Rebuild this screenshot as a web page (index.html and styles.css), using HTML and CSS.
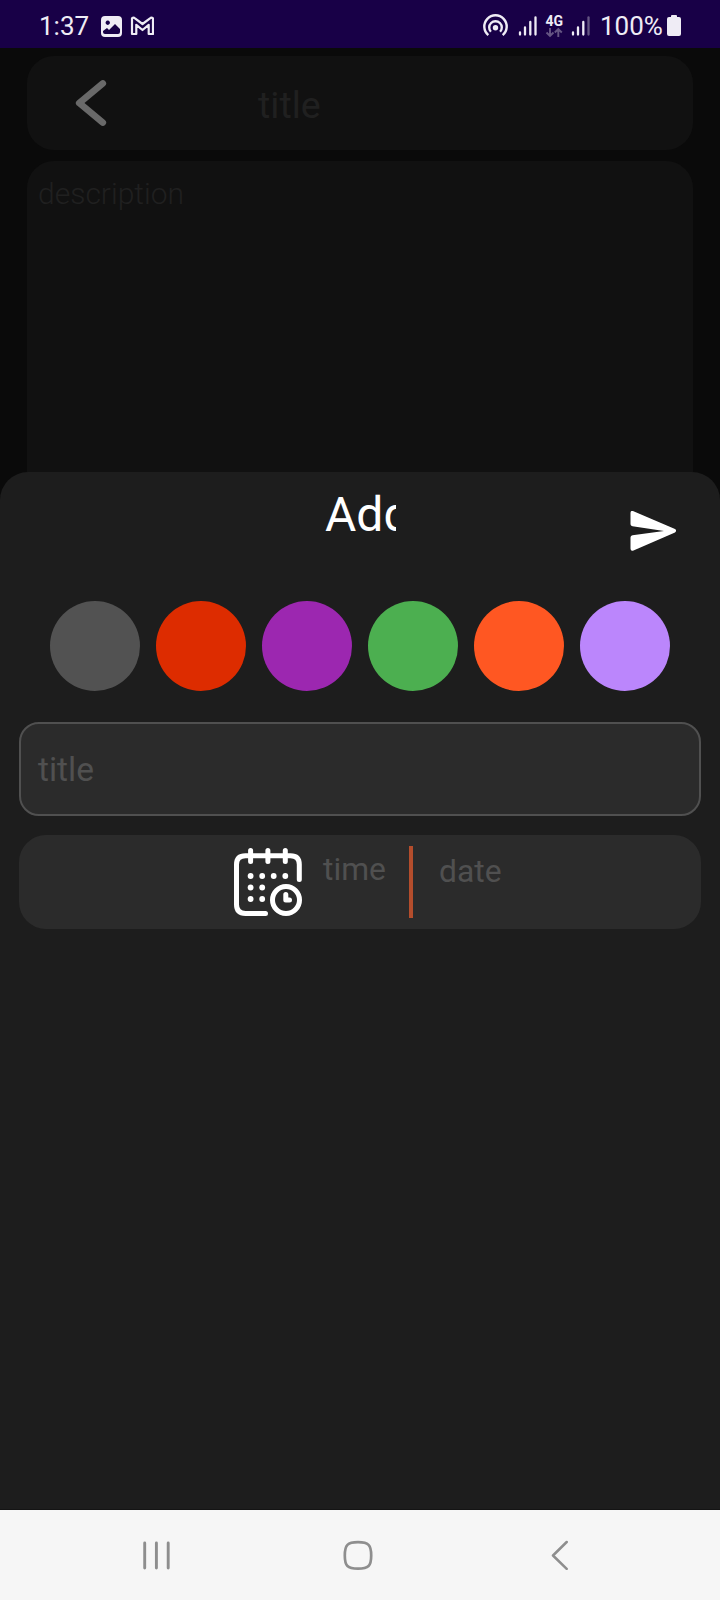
FILE: index.html
```html
<!DOCTYPE html>
<html lang="en">
<head>
<meta charset="utf-8">
<title>Add</title>
<link rel="stylesheet" href="styles.css">
</head>
<body>
<div class="screen">
  <header class="status">
    <span class="clock">1:37</span>
    <svg class="gallery" width="22" height="22" viewBox="100 15 22 22"><path fill-rule="evenodd" fill="#efecf5" d="M105 16h13q4 0 4 4v13q0 4-4 4h-13q-4 0-4-4V20q0-4 4-4zM103 32q0 2 2 2h13q2 0 2-2v-3l-5-5-6 6-2-2-4 3zM107.700 20.500a2.200 2.200 0 1 0 .1 0z"/></svg>
    <svg class="mail" width="24" height="20" viewBox="130 16 24 20"><path fill="none" stroke="#efecf5" stroke-width="2.200" stroke-linejoin="round" d="M132 18.300Q133.500 17 135 18.300L142.500 24l7.500-5.700Q151.500 17 153 18.300V34h-4.300V24.800L142.500 30l-6.200-5.200V34H132z"/></svg>
    <span class="spacer"></span>
    <svg width="120" height="26" viewBox="482 14 120 26" class="signals">
      <g fill="none" stroke="#efecf5" stroke-linecap="butt">
        <path stroke-width="2.400" d="M488.300 35.100A11.200 11.200 0 1 1 502.700 35.100"/>
        <path stroke-width="2.400" d="M490.900 31.800A6.300 6.300 0 1 1 500.100 31.800"/>
        <path stroke-width="2.300" stroke-linecap="round" d="M520 32.500V34.500M525 27.500V34.500M530.300 22V34.500M535.500 17.500V34.500M573 32.500V34.500M578 27.500V34.500M583.300 22V34.500"/>
        <path stroke="#655583" stroke-width="2.300" stroke-linecap="round" d="M588.500 17.500V34.500"/>
        <path stroke="#655583" stroke-width="1.900" d="M550 28v8M546.500 32.500l3.500 3.500 3.500-3.500M558.300 37v-8M554.800 32.500l3.500-3.500 3.500 3.500"/>
      </g>
      <circle cx="495.500" cy="27.700" r="2.700" fill="#efecf5"/>
      <text class="net" x="545.500" y="25.500">4G</text>
    </svg>
    <span class="percent">100%</span>
    <svg class="battery" width="14" height="21" viewBox="0 0 14 21"><path fill="#efecf5" d="M4 2V1q0-1 1-1h4q1 0 1 1v1h2q2 0 2 2v15q0 2-2 2H2q-2 0-2-2V4q0-2 2-2z"/></svg>
  </header>

  <main class="editor">
    <div class="card heading">
      <svg width="32" height="48" viewBox="75 79 32 48"><path fill="none" stroke="#696969" stroke-width="6.800" stroke-linecap="round" stroke-linejoin="round" d="M102.700 83.500L79.300 103l23.400 19.500"/></svg>
      <span class="heading-text">title</span>
    </div>
    <div class="card notes">description</div>
  </main>

  <section class="sheet">
    <div class="sheet-top">
      <h1 class="sheet-title">Add</h1>
      <svg class="send" width="46" height="40" viewBox="630 511 46 40"><path fill="#fff" d="M630.500 513q0-3 3-1.800L675 529q2.200 1.800 0 3.500L633.500 550.500q-3 1-3-2v-11q0-2 2-2.300L664 531 632.500 526.300q-2-.3-2-2z"/></svg>
    </div>
    <div class="swatches">
      <i class="swatch gray"></i><i class="swatch red"></i><i class="swatch purple"></i><i class="swatch green"></i><i class="swatch orange"></i><i class="swatch lavender"></i>
    </div>
    <div class="field">title</div>
    <div class="when">
      <svg class="calendar" width="70" height="70" viewBox="233 847 70 70">
        <g fill="none" stroke="#fff" stroke-width="5" stroke-linecap="round">
          <path d="M299.300 879.500V864.500Q299.300 855.700 290.500 855.700H245.500Q236.500 855.700 236.500 864.500V904.500Q236.500 913.400 245.500 913.400H265.500"/>
          <path d="M250.600 850.500V861.500M267.900 850.500V861.500M285.300 850.500V861.500"/>
          <circle cx="286" cy="900" r="13.500"/>
          <path stroke-linejoin="round" d="M285.800 894.500V900H289.500"/>
        </g>
        <g fill="#fff"><circle cx="250.600" cy="876" r="2.900"/><circle cx="262.200" cy="876" r="2.900"/><circle cx="273.700" cy="876" r="2.900"/><circle cx="285.300" cy="876" r="2.900"/><circle cx="250.600" cy="887.500" r="2.900"/><circle cx="262.200" cy="887.500" r="2.900"/><circle cx="250.600" cy="899" r="2.900"/><circle cx="262.200" cy="899" r="2.900"/></g>
      </svg>
      <span class="time">time</span>
      <span class="divider"></span>
      <span class="date">date</span>
    </div>
  </section>

  <nav class="nav">
    <svg width="28" height="30" viewBox="0 0 28 30"><path fill="none" stroke="#8e8e8e" stroke-width="2.900" stroke-linecap="round" d="M1.700 3V28M13.400 3V28M25.200 3V28"/></svg>
    <svg class="home" width="30" height="30" viewBox="0 0 30 30"><path fill="none" stroke="#8e8e8e" stroke-width="2.700" d="M15 2.200C25.500 2.200 28.200 4.900 28.200 15.400S25.500 28.600 15 28.600 1.800 25.900 1.800 15.400 4.500 2.200 15 2.200z"/></svg>
    <svg width="18" height="30" viewBox="0 0 18 30"><path fill="none" stroke="#8e8e8e" stroke-width="2.500" stroke-linecap="round" stroke-linejoin="round" d="M15.700 2L2 15.500l13.700 13.300"/></svg>
  </nav>
</div>
</body>
</html>
```
FILE: styles.css
```css
* { box-sizing: border-box; }
body { margin: 0; background: #0a0a0a; font-family: Roboto, "Noto Sans", sans-serif; }
svg { display: block; flex: none; }
.screen { position: relative; width: 720px; height: 1600px; overflow: hidden; display: flex; flex-direction: column; background: #0a0a0a; }

.status { height: 48px; flex: none; display: flex; align-items: flex-start; padding: 16px 39px 0; background: #180047; color: #efecf5; font-size: 26px; line-height: 20px; }
.clock { width: 61px; }
.gallery { margin-top: -1px; }
.mail { margin-left: 8px; }
.spacer { flex: 1; }
.signals { width: 120px; margin-top: -2px; margin-right: -2px; }
.net { font-size: 14px; font-weight: 700; fill: #efecf5; }
.percent { width: 67px; white-space: nowrap; }
.battery { margin-top: -1px; }

.editor { flex: 1; display: flex; flex-direction: column; gap: 11px; padding: 8px 27px 0; }
.card { background: #111; border-radius: 27px; }
.heading { height: 94px; display: flex; align-items: flex-start; padding: 23px 48px; }
.heading-text { margin: 3px 0 0 151px; font-size: 37.5px; line-height: 46px; color: #202020; }
.notes { flex: 1; padding: 15px 11px; font-size: 30px; line-height: 36px; font-weight: 300; color: #202020; }

/* Bottom sheet covering the dimmed editor */
.sheet { position: absolute; left: 0; right: 0; top: 472px; bottom: 90px; padding: 0 19px; background: #1d1d1d; border-radius: 28px 28px 0 0; border-bottom: 1px solid #141414; }
.sheet-top { height: 129px; display: flex; align-items: flex-start; justify-content: space-between; padding: 15px 25px 0 306px; }
.sheet-title { width: 71px; margin: 0; overflow: hidden; white-space: nowrap; font-size: 48px; line-height: 56px; font-weight: 400; color: #fff; }
.send { margin-top: 24px; }
.swatches { display: flex; gap: 16px; padding: 0 31px; }
.swatch { width: 90px; height: 90px; border-radius: 50%; }
.gray { background: #525252; }
.red { background: #dd2c00; }
.purple { background: #9c27b0; }
.green { background: #4caf50; }
.orange { background: #ff5722; }
.lavender { background: #bb86fc; }
.field { height: 94px; margin-top: 31px; padding: 0 17px; border: 2px solid #505050; border-radius: 20px; background: #2b2b2b; color: #505050; font-size: 33.5px; line-height: 91px; }
.when { height: 94px; margin-top: 19px; display: flex; align-items: flex-start; padding-left: 214px; border-radius: 27px; background: #2b2b2b; color: #505050; font-size: 31.8px; line-height: 38px; }
.calendar { margin-top: 12px; }
.time { width: 86px; margin: 15px 0 0 20px; }
.divider { width: 4px; height: 72px; margin-top: 11px; background: #b44d2c; }
.date { margin: 17px 0 0 26px; }

.nav { height: 90px; flex: none; display: flex; justify-content: space-between; align-items: flex-start; padding: 30px 151px 0 143px; background: #f6f6f6; }
.home { margin-right: 7px; }
```
